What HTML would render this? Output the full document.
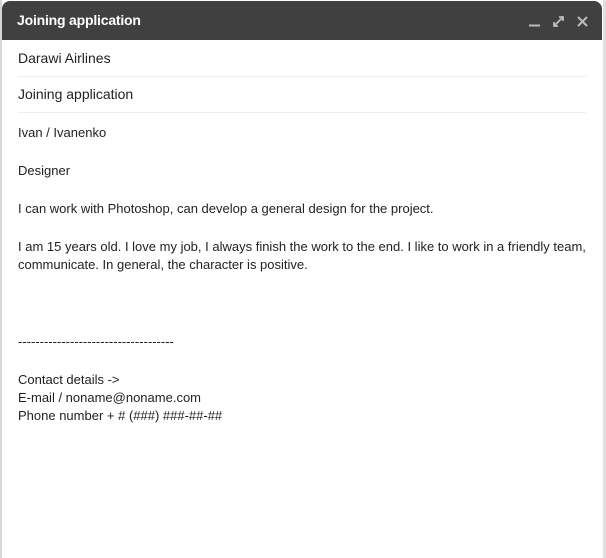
<!DOCTYPE html>
<html><head><style>
body{margin:0;width:606px;height:558px;background:#fff;overflow:hidden;position:relative;font-family:"Liberation Sans",Arial,sans-serif;}
.lb{position:absolute;left:0;top:0;width:2px;height:558px;background:#d6d6d6}
.rb{position:absolute;right:0;top:0;width:3px;height:558px;background:#e0e0e0}
.hd{position:absolute;left:2px;top:1px;width:600px;height:39px;background:#404040;border-radius:8px 8px 0 0}
.hd span{position:absolute;left:15px;top:11px;color:#fff;font-weight:bold;font-size:14px;letter-spacing:-0.2px}
.f{position:absolute;left:18px;width:568px;font-size:14px;color:#222;border-bottom:1px solid #eceff1;height:35px}
.t{position:absolute;left:18px;font-size:13px;color:#222;line-height:18px}
</style></head><body>
<div class="lb"></div><div class="rb"></div>
<div class="hd"><span>Joining application</span>
<svg style="position:absolute;left:520px;top:10px" width="80" height="22">
<line x1="7" y1="14.5" x2="18" y2="14.5" stroke="#bbb" stroke-width="2"/>
<path d="M32 15 L41 6 M37 6 H41 V10 M32 11 V15 H36" stroke="#bbb" stroke-width="1.8" fill="none"/>
<path d="M56 6 L65 15 M65 6 L56 15" stroke="#bbb" stroke-width="2"/>
</svg></div>
<div class="f" style="top:41px"><div style="position:absolute;top:9px">Darawi Airlines</div></div>
<div class="f" style="top:77px"><div style="position:absolute;top:9px">Joining application</div></div>
<div class="t" style="top:124px">Ivan / Ivanenko</div>
<div class="t" style="top:162px">Designer</div>
<div class="t" style="top:200px">I can work with Photoshop, can develop a general design for the project.</div>
<div class="t" style="top:238px">I am 15 years old. I love my job, I always finish the work to the end. I like to work in a friendly team,<br>communicate. In general, the character is positive.</div>
<div class="t" style="top:333px">------------------------------------</div>
<div class="t" style="top:371px">Contact details -&gt;<br>E-mail / noname@noname.com<br>Phone number + # (###) ###-##-##</div>
</body></html>
